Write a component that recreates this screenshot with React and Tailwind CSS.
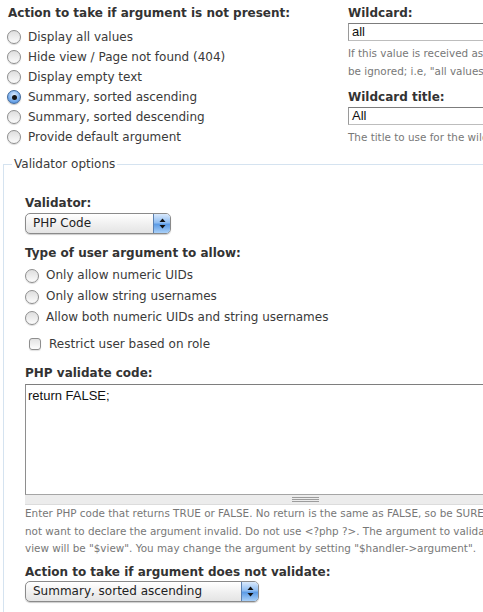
import React from "react";

function Radio({ checked }) {
  if (checked) {
    return (
      <span className="flex h-[14px] w-[14px] shrink-0 items-center justify-center rounded-full border border-[#40699c] bg-[radial-gradient(circle_at_50%_35%,#e2efff,#7fb2ee_55%,#3a7fd6)] shadow-[0_1px_1px_rgba(0,0,0,0.25)]">
        <span className="h-[5px] w-[5px] rounded-full bg-[#141414]" />
      </span>
    );
  }
  return (
    <span className="h-[14px] w-[14px] shrink-0 rounded-full border border-[#8e8e8e] bg-[linear-gradient(#dedede,#fbfbfb)] shadow-[0_1px_1px_rgba(0,0,0,0.15)]" />
  );
}

function Select({ value, width }) {
  return (
    <div
      className={
        "flex h-[21px] overflow-hidden rounded-[5px] border border-[#8a8a8a] bg-[linear-gradient(#ffffff,#f1f1f1_50%,#e4e4e4)] shadow-[0_1px_1px_rgba(0,0,0,0.2)] " +
        width
      }
    >
      <span className="flex-1 pl-[7px] leading-[19px] text-[#222]">{value}</span>
      <span className="flex w-[17px] items-center justify-center border-l border-[#5b80b0] bg-[linear-gradient(#d9e9fc,#8fbdf2_45%,#5d9ce6_55%,#a9d0f8)]">
        <svg width="7" height="11" viewBox="0 0 7 11">
          <polygon points="3.5,0.5 6.5,4 0.5,4" fill="#111" />
          <polygon points="0.5,7 6.5,7 3.5,10.5" fill="#111" />
        </svg>
      </span>
    </div>
  );
}

function Label({ children, className = "" }) {
  return (
    <div className={"font-bold leading-[18px] text-[#333] " + className}>
      {children}
    </div>
  );
}

export default function App() {
  const topOptions = [
    "Display all values",
    "Hide view / Page not found (404)",
    "Display empty text",
    "Summary, sorted ascending",
    "Summary, sorted descending",
    "Provide default argument",
  ];
  const userOptions = [
    "Only allow numeric UIDs",
    "Only allow string usernames",
    "Allow both numeric UIDs and string usernames",
  ];
  return (
    <div className="h-[612px] w-[483px] overflow-hidden bg-white font-['DejaVu_Sans',sans-serif] text-[12px] text-[#3a3a3a]">
      <div className="w-[640px]">
        <div className="flex pt-[4px]">
          <div className="w-[348px] shrink-0 pl-[7px]">
            <Label className="pl-[1px]">Action to take if argument is not present:</Label>
            <div className="mt-[5px]">
              {topOptions.map((o, i) => (
                <div key={o} className="flex h-[20px] items-center gap-[7px]">
                  <Radio checked={i === 3} />
                  <span className="leading-[20px]">{o}</span>
                </div>
              ))}
            </div>
          </div>
          <div className="min-w-0 flex-1">
            <Label>Wildcard:</Label>
            <div className="mt-[1px] h-[18px] w-[240px] border border-[#bdbdbd] border-t-[#7c7c7c] border-l-[#9a9a9a] pl-[3px] font-['Liberation_Sans',sans-serif] text-[13px] leading-[16px] text-[#111]">
              all
            </div>
            <div className="mt-[3px] whitespace-nowrap text-[10.4px] leading-[18px] text-[#777]">
              <div>If this value is received as an argument, the argument will</div>
              <div>be ignored; i.e, "all values"</div>
            </div>
            <Label className="mt-[8px]">Wildcard title:</Label>
            <div className="mt-[1px] h-[18px] w-[240px] border border-[#bdbdbd] border-t-[#7c7c7c] border-l-[#9a9a9a] pl-[3px] font-['Liberation_Sans',sans-serif] text-[13px] leading-[16px] text-[#111]">
              All
            </div>
            <div className="mt-[3px] whitespace-nowrap text-[10.4px] leading-[18px] text-[#777]">
              The title to use for the wildcard in substitutions elsewhere.
            </div>
          </div>
        </div>

        <fieldset className="ml-[3px] mt-[8px] min-w-0 border-l border-t border-[#d5e3f0]">
          <legend className="ml-[8px] px-[2px] leading-[18px] text-[#3a3a3a]">
            Validator options
          </legend>
          <div className="pb-[20px] pl-[21px] pt-[21px]">
            <Label>Validator:</Label>
            <div className="mt-[1px]">
              <Select value="PHP Code" width="w-[146px]" />
            </div>
            <Label className="mt-[10px]">Type of user argument to allow:</Label>
            <div className="mt-[3px]">
              {userOptions.map((o) => (
                <div key={o} className="flex h-[21px] items-center gap-[7px]">
                  <Radio />
                  <span className="leading-[21px]">{o}</span>
                </div>
              ))}
            </div>
            <div className="mt-[7px] flex h-[18px] items-center gap-[8px] pl-[4px]">
              <span className="h-[12px] w-[12px] shrink-0 rounded-[3px] border border-[#8e8e8e] bg-[linear-gradient(#e2e2e2,#fdfdfd)] shadow-[0_1px_1px_rgba(0,0,0,0.12)]" />
              <span>Restrict user based on role</span>
            </div>
            <Label className="mt-[11px]">PHP validate code:</Label>
            <div className="mt-[2px] h-[111px] w-[561px] border border-[#a5a5a5] border-t-[#7e7e7e] border-l-[#8e8e8e] px-[2px] pt-[3px] font-['Liberation_Sans',sans-serif] text-[13px] leading-[16px] text-[#111]">
              return FALSE;
            </div>
            <div className="flex h-[10px] w-[561px] flex-col items-center justify-center gap-[1px] border-b border-[#dcdcdc] bg-[#ececec]">
              <span className="h-px w-[27px] bg-[#9c9c9c]" />
              <span className="h-px w-[27px] bg-[#9c9c9c]" />
              <span className="h-px w-[27px] bg-[#9c9c9c]" />
            </div>
            <div className="whitespace-nowrap text-[10.4px] leading-[17.5px] text-[#777]">
              <div>Enter PHP code that returns TRUE or FALSE. No return is the same as FALSE, so be SURE to return something if you do</div>
              <div>not want to declare the argument invalid. Do not use &lt;?php ?&gt;. The argument to validate will be "$argument" and the</div>
              <div>view will be "$view". You may change the argument by setting "$handler-&gt;argument".</div>
            </div>
            <Label className="mt-[5px]">Action to take if argument does not validate:</Label>
            <div>
              <Select value="Summary, sorted ascending" width="w-[234px]" />
            </div>
          </div>
        </fieldset>
      </div>
    </div>
  );
}
